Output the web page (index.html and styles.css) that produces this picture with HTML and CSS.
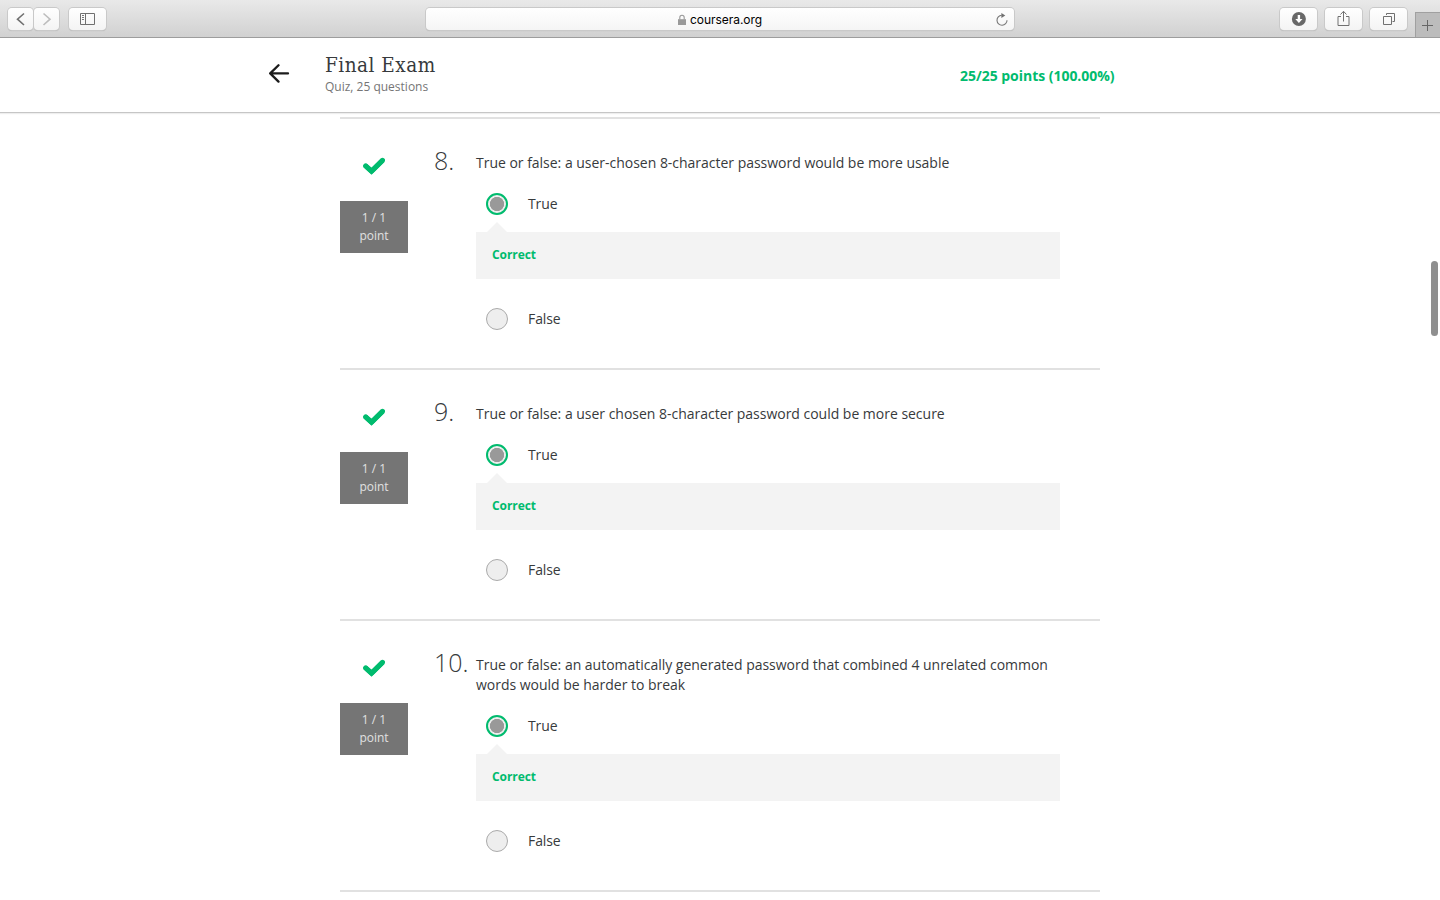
FILE: index.html
```html
<!DOCTYPE html>
<html lang="en">
<head>
<meta charset="utf-8">
<title>Final Exam</title>
<link rel="stylesheet" href="styles.css">
</head>
<body>
<svg class="defs" aria-hidden="true">
  <symbol id="check" viewBox="0 0 22 18"><path d="M2 8.3L8.5 14.4L19.8 3.3" fill="none" stroke="#00bb6e" stroke-width="5" stroke-linejoin="miter"/><path d="M2.6 8.9L8.5 14.2M19.5 3.3L9 13.8" fill="none" stroke="#00bb6e" stroke-width="5" stroke-linecap="round"/></symbol>
</svg>
<div class="browser">
  <div class="tools">
    <div class="pair">
      <span class="btn nav"><svg width="26" height="22"><path d="M16 5.5L9.5 11.2L16 17" fill="none" stroke="#707070" stroke-width="1.6"/></svg></span>
      <span class="btn nav"><svg width="26" height="22"><path d="M9.5 5.5L16 11.2L9.5 17" fill="none" stroke="#bdbdbd" stroke-width="1.6"/></svg></span>
    </div>
    <span class="btn"><svg width="37" height="22"><path d="M11.5 5.5h14v11h-14zM16.5 5.5v11" fill="none" stroke="#707070"/><path d="M13 7.5h2M13 9.5h2M13 11.5h2" stroke="#777"/></svg></span>
  </div>
  <div class="address">
    <span class="host"><svg width="8" height="12" viewBox="0 0 8 12"><path d="M1.8 5.5V3.4a2.2 2.2 0 0 1 4.4 0v2.1" fill="none" stroke="#999" stroke-width="1.1"/><path d="M0 5.2h8v5.8H0z" fill="#999"/></svg><span class="domain">coursera.org</span></span>
    <svg class="reload" width="14" height="14" viewBox="0 0 14 14"><path d="M6.7 2.3A5 5 0 1 0 12 7.2" fill="none" stroke="#777" stroke-width="1.1"/><path d="M6.4 0L10.3 2.4L6.4 5z" fill="#707070"/></svg>
  </div>
  <div class="tools right">
    <span class="btn"><svg width="37" height="22"><circle cx="18.9" cy="11" r="7" fill="#686868"/><path d="M17.7 7h2.4v4h2.4l-3.6 4-3.6-4h2.4z" fill="#fff"/></svg></span>
    <span class="btn"><svg width="37" height="22"><path d="M16 8.5h-3v9h11v-9h-3M18.5 13.5V3.5M15.5 6.5l3-3.2 3 3.2" fill="none" stroke="#707070"/></svg></span>
    <span class="btn"><svg width="37" height="22"><path d="M13.5 8.5h8v8h-8z" fill="none" stroke="#707070"/><path d="M16.5 7V5.5h8v8h-2" fill="none" stroke="#707070"/></svg></span>
    <span class="newtab"><svg width="24" height="25"><path d="M6 12.5h11M11.5 7v11" stroke="#666"/></svg></span>
  </div>
</div>

<header class="header">
  <svg class="back" width="22" height="20" viewBox="0 0 22 20"><path d="M20 10.4H2.5M10.5 2.2L2.2 10.4l8.3 8.2" fill="none" stroke="#1c1c1c" stroke-width="2.3" stroke-linecap="round" stroke-linejoin="round"/></svg>
  <div class="heading">
    <h1>Final Exam</h1>
    <p>Quiz, 25 questions</p>
  </div>
  <strong class="score">25/25 points (100.00%)</strong>
</header>

<main class="quiz">
  <section class="question">
    <div class="grade"><svg class="check"><use href="#check"/></svg><div class="points">1 / 1<br>point</div></div>
    <div class="number">8.</div>
    <div class="body">
      <p class="prompt">True or false: a user-chosen 8-character password would be more usable</p>
      <div class="option"><span class="radio on"></span>True</div>
      <div class="feedback">Correct</div>
      <div class="option"><span class="radio"></span>False</div>
    </div>
  </section>
  <section class="question">
    <div class="grade"><svg class="check"><use href="#check"/></svg><div class="points">1 / 1<br>point</div></div>
    <div class="number">9.</div>
    <div class="body">
      <p class="prompt">True or false: a user chosen 8-character password could be more secure</p>
      <div class="option"><span class="radio on"></span>True</div>
      <div class="feedback">Correct</div>
      <div class="option"><span class="radio"></span>False</div>
    </div>
  </section>
  <section class="question last">
    <div class="grade"><svg class="check"><use href="#check"/></svg><div class="points">1 / 1<br>point</div></div>
    <div class="number">10.</div>
    <div class="body">
      <p class="prompt">True or false: an automatically generated password that combined 4 unrelated common<br>words would be harder to break</p>
      <div class="option"><span class="radio on"></span>True</div>
      <div class="feedback">Correct</div>
      <div class="option"><span class="radio"></span>False</div>
    </div>
  </section>
</main>
<div class="scroll-thumb"></div>
</body>
</html>
```
FILE: styles.css
```css
* { box-sizing: border-box; }
body { margin: 0; height: 900px; overflow: hidden; background: #fff; color: #373a3c; font: 14px/20px "Open Sans", sans-serif; }
h1, p { margin: 0; }
svg { display: block; flex: none; }
.defs { position: absolute; width: 0; height: 0; }

.browser { height: 38px; display: grid; grid-template-columns: 426px 588px 1fr; align-items: start; background: linear-gradient(#e9e9e9, #d1d1d1); border-bottom: 1px solid #9d9d9d; }
.tools { display: flex; gap: 10px; padding: 8px 0 0 8px; }
.pair { display: flex; gap: 1px; }
.btn { width: 37px; height: 22px; border-radius: 4px; background: linear-gradient(#fff, #f4f4f4); box-shadow: 0 0 0 1px #c9c9c9, 0 1px 1px #aaa; }
.btn.nav { width: 25px; }
.address { display: grid; grid-template-columns: 1fr auto; align-items: center; height: 22px; margin-top: 8px; padding-right: 5px; border-radius: 4px; background: linear-gradient(#fff, #f5f5f5); box-shadow: 0 0 0 1px #c9c9c9, 0 1px 1px #aaa; }
.host { display: flex; align-items: center; gap: 4px; padding-left: 252px; font: 12px/22px Inter, sans-serif; color: #000; }
.domain { padding-top: 1px; letter-spacing: -0.04px; }
.right { justify-content: flex-end; gap: 8px; padding: 8px 0 0; }
.newtab { width: 25px; height: 25px; margin-top: 4px; border: solid #a0a0a0; border-width: 1px 0 0 1px; background: #bcbcbc; }

.header { height: 75px; display: flex; align-items: flex-start; padding-left: 268px; border-bottom: 1px solid #c6c6c6; box-shadow: 0 1px 1px #eee; }
.back { margin-top: 25px; }
.heading { width: 635px; padding: 13px 0 0 35px; }
.heading h1 { font: 400 20.5px/28px "DejaVu Serif Condensed", "DejaVu Serif", serif; font-stretch: condensed; letter-spacing: 0.5px; white-space: nowrap; }
.heading p { margin-top: -1px; font-size: 12px; line-height: 18px; color: #757575; }
.score { margin-top: 28px; margin-left: 35px; color: #00bb6e; white-space: nowrap; letter-spacing: -0.03px; }

.quiz { width: 760px; margin: 4px auto 0; }
.question { height: 251px; display: grid; grid-template-columns: 94px 42px 584px; border-top: 2px solid #e1e1e1; padding-top: 34px; }
.question.last { height: 273px; border-bottom: 2px solid #e1e1e1; }
.grade { width: 68px; }
.check { width: 22px; height: 18px; margin: 4px auto 0; }
.points { height: 52px; margin-top: 26px; padding-top: 8px; background: #757575; color: #e1e1e1; font-size: 12px; line-height: 18px; text-align: center; }
.number { font-size: 25px; font-weight: 300; line-height: 14px; white-space: nowrap; }
.prompt { white-space: nowrap; letter-spacing: -0.018px; }
.option { height: 22px; display: flex; align-items: center; gap: 20px; margin-top: 20px; padding-left: 10px; letter-spacing: -0.1px; }
.radio { width: 22px; height: 22px; border: 1px solid #aaa; border-radius: 50%; background: #eee; }
.radio.on { border: 2px solid #00bb6e; background: radial-gradient(circle, #999 0 6.8px, #eee 7.4px); }
.feedback { position: relative; height: 47px; margin: 17px 0 29px; padding: 13px 16px; background: #f3f3f3; color: #00bb6e; font-size: 12px; font-weight: 700; letter-spacing: -0.07px; }
.feedback::before { content: ""; position: absolute; left: 11px; top: -10px; border: solid transparent; border-width: 0 10px 10px; border-bottom-color: #f3f3f3; }
.scroll-thumb { position: absolute; left: 1431px; top: 261px; width: 7px; height: 75px; border-radius: 4px; background: #8f8f8f; }
```
